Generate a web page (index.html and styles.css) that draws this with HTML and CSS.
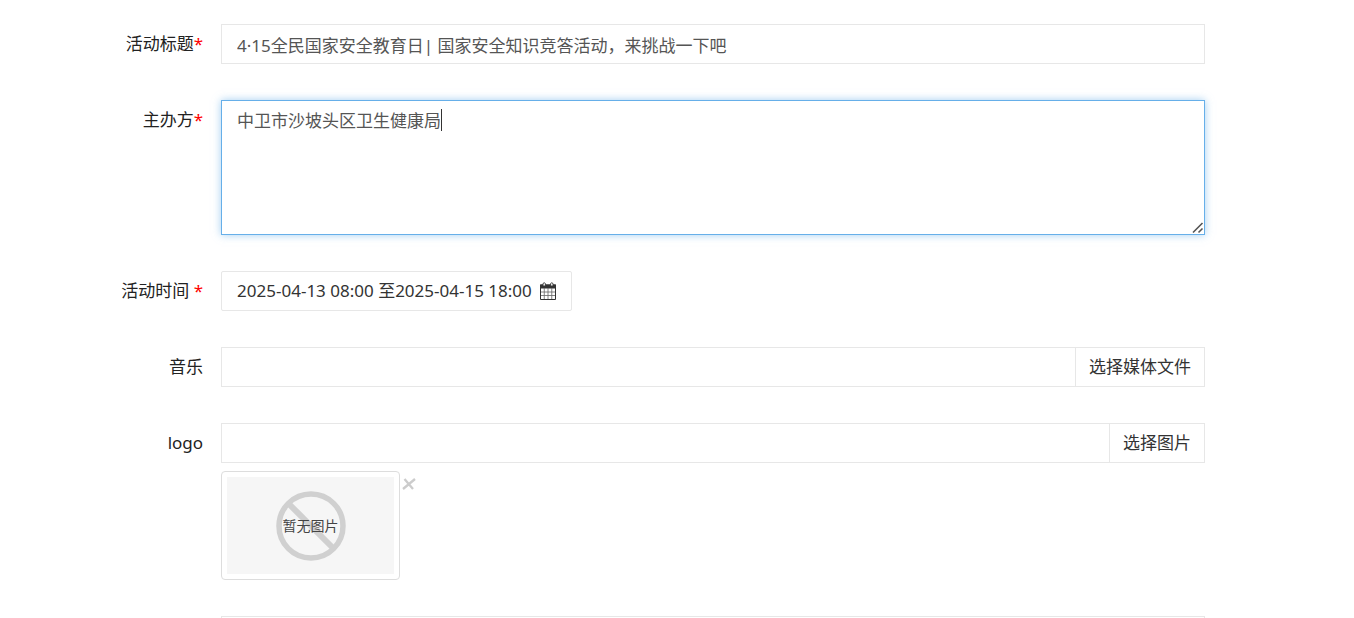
FILE: index.html
```html
<!DOCTYPE html>
<html lang="zh-CN">
<head>
<meta charset="utf-8">
<meta name="viewport" content="width=device-width, initial-scale=1">
<title>活动设置</title>
<link rel="stylesheet" href="styles.css">
</head>
<body>
<form class="form">
  <div class="row">
    <label class="label" for="title">活动标题<span class="required">*</span></label>
    <input class="control" id="title" type="text" value="4·15全民国家安全教育日| 国家安全知识竞答活动，来挑战一下吧">
  </div>
  <div class="row">
    <label class="label" for="host">主办方<span class="required">*</span></label>
    <div class="area-wrap">
      <textarea class="control area" id="host">中卫市沙坡头区卫生健康局</textarea>
      <span class="caret"></span>
      <svg class="grip" viewBox="0 0 12 12" aria-hidden="true"><path d="M1 10.500L10.500 1M6.500 10.500L10.500 6.500" stroke="#555" stroke-width="1.600"/></svg>
    </div>
  </div>
  <div class="row">
    <label class="label" for="time">活动时间 <span class="required">*</span></label>
    <button class="date" id="time" type="button">
      <span>2025-04-13 08:00 至2025-04-15 18:00</span>
      <svg class="calendar" viewBox="0 0 16 18" aria-hidden="true">
        <path d="M.5 3H15.500V17.500H.5Z" fill="#fff" stroke="#333"/>
        <path d="M0 2.500H16V6.500H0Z" fill="#333"/>
        <path d="M4.250 6V17M8 6V17M11.750 6V17M1 10H15M1 13.500H15" stroke="#666" stroke-width=".8"/>
        <path d="M3 4V1.500Q4.200 0 5.400 1.500V4ZM10.600 4V1.500Q11.800 0 13 1.500V4Z" fill="#fff" stroke="#333" stroke-width=".9"/>
      </svg>
    </button>
  </div>
  <div class="row">
    <label class="label" for="music">音乐</label>
    <div class="group">
      <input class="control" id="music" type="text">
      <button class="pick" type="button">选择媒体文件</button>
    </div>
  </div>
  <div class="row">
    <label class="label" for="logo">logo</label>
    <div class="upload">
      <div class="group">
        <input class="control" id="logo" type="text">
        <button class="pick" type="button">选择图片</button>
      </div>
      <div class="preview">
        <div class="thumb">
          <svg class="ban" viewBox="0 0 70 70" aria-hidden="true">
            <circle cx="35" cy="35" r="32" fill="none" stroke="#d0d0d0" stroke-width="5.500"/>
            <path d="M12 12L58 58" stroke="#d0d0d0" stroke-width="6"/>
          </svg>
          <span class="thumb-text">暂无图片</span>
        </div>
        <button class="remove" type="button" aria-label="删除">
          <svg class="cross" viewBox="0 0 14 12" aria-hidden="true"><path d="M2.500 1L11 11M13 1L1 11" stroke="#ccc" stroke-width="2.300"/></svg>
        </button>
      </div>
    </div>
  </div>
  <div class="row">
    <label class="label" for="extra"></label>
    <input class="control" id="extra" type="text">
  </div>
</form>
</body>
</html>
```
FILE: styles.css
```css
* {
  box-sizing: border-box;
}

body {
  margin: 0;
  height: 100vh;
  overflow: hidden;
  background: #fff;
  color: #222;
  font-family: "Noto Sans", "Noto Sans CJK SC", sans-serif;
  font-size: 17px;
  line-height: 24px;
}

.form {
  display: flex;
  flex-direction: column;
  gap: 36px;
  height: 100%;
  overflow: hidden;
  padding: 24px 11% 0 0;
}

.row {
  display: grid;
  grid-template-columns: 15vw minmax(0, 1fr);
  column-gap: 18px;
  align-items: start;
}

.label {
  padding-top: 8px;
  text-align: right;
}

.required {
  color: #f00;
}

.control {
  display: block;
  width: 100%;
  min-width: 0;
  height: 40px;
  margin: 0;
  padding: 8px 15px;
  border: 1px solid #e7e7e7;
  border-radius: 0;
  outline: none;
  background: #fff;
  color: #555;
  font: inherit;
}

.area-wrap {
  position: relative;
}

.area {
  height: 135px;
  border-color: #66afe9;
  box-shadow: 0 0 8px rgba(102, 175, 233, 0.6);
  resize: none;
}

.caret {
  position: absolute;
  top: 9px;
  left: 220px;
  width: 1px;
  height: 22px;
  background: #333;
}

.grip {
  position: absolute;
  right: 1px;
  bottom: 1px;
  width: 12px;
  height: 12px;
  pointer-events: none;
}

.date {
  display: flex;
  align-items: center;
  justify-self: start;
  gap: 8px;
  height: 40px;
  padding: 0 15px;
  border: 1px solid #e7e7e7;
  border-radius: 2px;
  background: #fff;
  color: #333;
  font: inherit;
}

.calendar {
  width: 16px;
  height: 18px;
}

.group {
  display: flex;
}

.group .control {
  flex: 1;
}

.pick {
  flex: none;
  height: 40px;
  margin-left: -1px;
  padding: 0 13px;
  border: 1px solid #e7e7e7;
  background: #fff;
  color: #333;
  font: inherit;
}

.preview {
  display: flex;
  align-items: flex-start;
  gap: 1px;
  margin-top: 8px;
}

.thumb {
  display: grid;
  place-items: center;
  width: 179px;
  height: 109px;
  padding: 5px;
  border: 1px solid #ddd;
  border-radius: 4px;
  background: #f6f6f6 content-box;
}

.ban {
  grid-area: 1 / 1;
  width: 70px;
  height: 70px;
}

.thumb-text {
  grid-area: 1 / 1;
  color: #444;
  font-size: 14px;
}

.remove {
  display: flex;
  padding: 7px 1px;
  border: 0;
  background: none;
}

.cross {
  width: 14px;
  height: 12px;
}
```
